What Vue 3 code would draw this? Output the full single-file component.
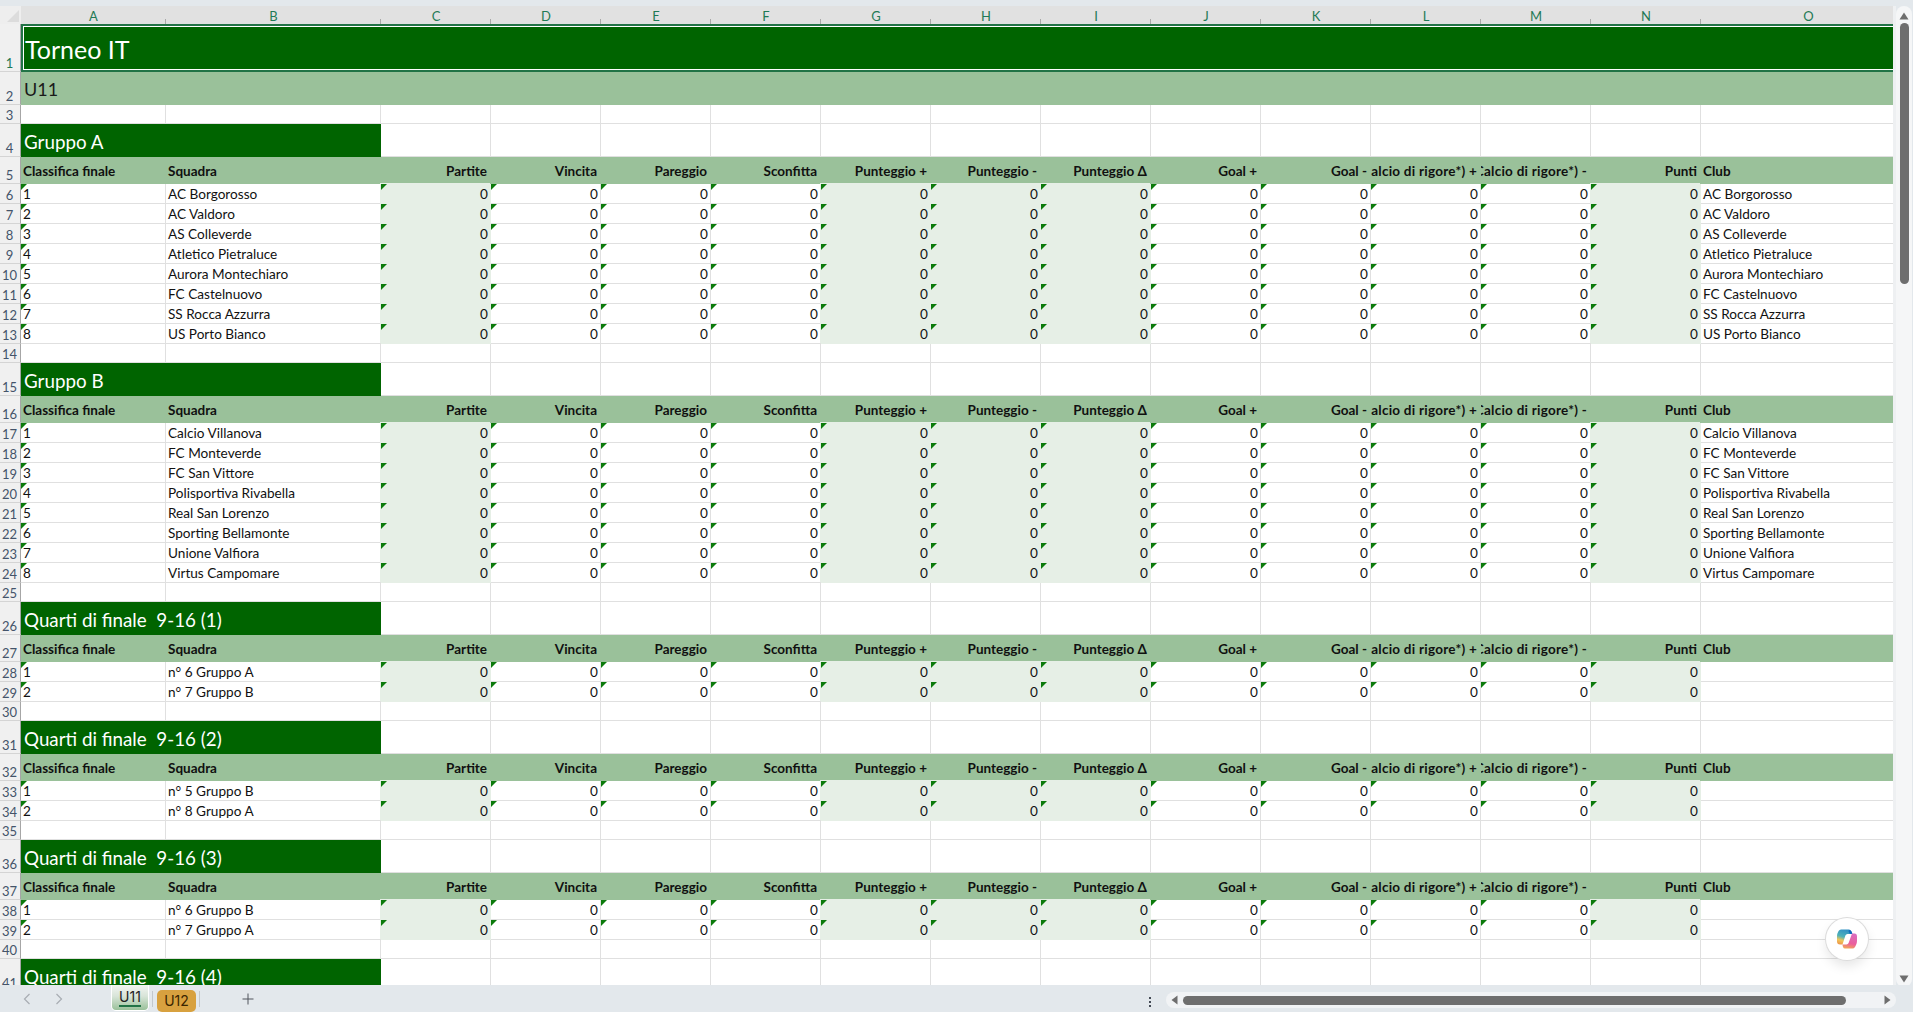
<script setup>
const letters = 'ABCDEFGHIJKLMNO'.split('')
const heads = ['Partite','Vincita','Pareggio','Sconfitta','Punteggio +','Punteggio -','Punteggio Δ','Goal +','Goal -','Goal (Calcio di rigore*) +','Goal (Calcio di rigore*) -','Punti']
const clipped = [9, 10]
const shaded = [0,4,5,6,11]
const zeros = heads.map((_, i) => i)
const sections = [
  { title: 'Gruppo A', club: true, teams: ['AC Borgorosso','AC Valdoro','AS Colleverde','Atletico Pietraluce','Aurora Montechiaro','FC Castelnuovo','SS Rocca Azzurra','US Porto Bianco'] },
  { title: 'Gruppo B', club: true, teams: ['Calcio Villanova','FC Monteverde','FC San Vittore','Polisportiva Rivabella','Real San Lorenzo','Sporting Bellamonte','Unione Valfiora','Virtus Campomare'] },
  { title: 'Quarti di finale\u00a0 9-16 (1)', club: false, teams: ['n° 6 Gruppo A','n° 7 Gruppo B'] },
  { title: 'Quarti di finale\u00a0 9-16 (2)', club: false, teams: ['n° 5 Gruppo B','n° 8 Gruppo A'] },
  { title: 'Quarti di finale\u00a0 9-16 (3)', club: false, teams: ['n° 6 Gruppo B','n° 7 Gruppo A'] },
]
const rows = []
rows.push({ kind: 'blank' })
sections.forEach(s => {
  rows.push({ kind: 'title', title: s.title })
  rows.push({ kind: 'head' })
  s.teams.forEach((t, i) => rows.push({ kind: 'data', pos: i + 1, team: t, club: s.club ? t : '' }))
  rows.push({ kind: 'blank' })
})
rows.push({ kind: 'title', title: 'Quarti di finale\u00a0 9-16 (4)' })
rows.forEach((r, i) => { r.n = i + 3 })
</script>

<template>
  <div class="app">
    <div class="topstrip"></div>
    <div class="main">
      <div class="sheet">
        <div class="row colhead">
          <div class="corner"><span class="corner-tri"></span></div>
          <div v-for="l in letters" :key="l" class="letter">{{ l }}</div>
        </div>
        <div class="row r1">
          <div class="rn sel">1</div>
          <div class="banner">Torneo IT</div>
        </div>
        <div class="row r2">
          <div class="rn">2</div>
          <div class="sub">U11</div>
        </div>
        <div v-for="r in rows" :key="r.n" class="row" :class="'k-' + r.kind">
          <div class="rn">{{ r.n }}</div>
          <template v-if="r.kind === 'blank'">
            <div v-for="l in letters" :key="l" class="cell"></div>
          </template>
          <template v-else-if="r.kind === 'title'">
            <div class="gtitle">{{ r.title }}</div>
            <div v-for="l in letters.slice(2)" :key="l" class="cell"></div>
          </template>
          <template v-else-if="r.kind === 'head'">
            <div class="hcell left">Classifica finale</div>
            <div class="hcell left">Squadra</div>
            <div v-for="(h, i) in heads" :key="h" class="hcell right"><span :class="{ wide: clipped.includes(i) }">{{ h }}</span></div>
            <div class="hcell left">Club</div>
          </template>
          <template v-else>
            <div class="cell txt tri">{{ r.pos }}</div>
            <div class="cell txt">{{ r.team }}</div>
            <div v-for="i in zeros" :key="i" class="cell num tri" :class="{ shade: shaded.includes(i) }">0</div>
            <div class="cell txt">{{ r.club }}</div>
          </template>
        </div>
      </div>
      <div class="gutter"></div>
      <div class="vscroll">
        <svg class="arrow" width="10" height="8" viewBox="0 0 10 8"><path d="M5 0.5 L9.5 7.5 H0.5 Z" fill="#6e6e6e"/></svg>
        <div class="vthumb"></div>
        <div class="vspace"></div>
        <svg class="arrow" width="10" height="8" viewBox="0 0 10 8"><path d="M5 7.5 L9.5 0.5 H0.5 Z" fill="#6e6e6e"/></svg>
      </div>
      <div class="copilot">
        <svg width="22" height="22" viewBox="0 0 22 22">
          <defs>
            <linearGradient id="cpa" x1="0.6" y1="0" x2="0.3" y2="1">
              <stop offset="0" stop-color="#2f8fc4"/>
              <stop offset="0.5" stop-color="#4fb3b8"/>
              <stop offset="0.75" stop-color="#f0c65a"/>
              <stop offset="1" stop-color="#ee9a4a"/>
            </linearGradient>
            <linearGradient id="cpb" x1="0.6" y1="0" x2="0.4" y2="1">
              <stop offset="0" stop-color="#d96fc0"/>
              <stop offset="0.65" stop-color="#ea5f9c"/>
              <stop offset="1" stop-color="#f2a35a"/>
            </linearGradient>
          </defs>
          <path d="M5 1.5 H13 Q14.5 1.5 15 3 L16 6 H11.5 Q10 6 9.4 7.5 L6.5 16.5 H4 Q1 16.5 1 13.5 V8 Q1 6.5 1.6 5 L2.6 3 Q3.4 1.5 5 1.5 Z" fill="url(#cpa)"/>
          <path d="M13 2 Q15 2 15.6 3.6 L16.5 6 H14 L12.6 3.4 Z" fill="#0f6cbd"/>
          <path d="M16 5.5 H18.5 Q21 5.5 21 8.5 V13 Q21 15 20 17 L19 19 Q18 20.5 16.5 20.5 H9 Q7.5 20.5 7 19 L6.4 16.4 H10.5 Q12 16.4 12.6 15 Z" fill="url(#cpb)"/>
        </svg>
      </div>
    </div>
    <div class="tabbar">
      <div class="navs">
        <svg width="8" height="12" viewBox="0 0 8 12"><path d="M6.5 1 L1.5 6 L6.5 11" fill="none" stroke="#a8adb3" stroke-width="1.2"/></svg>
        <svg width="8" height="12" viewBox="0 0 8 12"><path d="M1.5 1 L6.5 6 L1.5 11" fill="none" stroke="#a8adb3" stroke-width="1.2"/></svg>
      </div>
      <div class="tab active">U11</div>
      <span class="tabsep"></span>
      <div class="tab u12">U12</div>
      <span class="tabsep"></span>
      <svg class="plus" width="12" height="12" viewBox="0 0 12 12"><path d="M6 0.5 V11.5 M0.5 6 H11.5" stroke="#50555c" stroke-width="1"/></svg>
      <div class="dots"><i></i><i></i><i></i></div>
      <div class="hscroll">
        <svg width="7" height="10" viewBox="0 0 7 10"><path d="M0.5 5 L6.5 0.5 V9.5 Z" fill="#6e6e6e"/></svg>
        <div class="hthumb"></div>
        <svg width="7" height="10" viewBox="0 0 7 10"><path d="M6.5 5 L0.5 0.5 V9.5 Z" fill="#6e6e6e"/></svg>
      </div>
    </div>
  </div>
</template>

<style scoped>
.app {
  width: 1913px;
  height: 1012px;
  display: flex;
  flex-direction: column;
  overflow: hidden;
  background: #e3e8ec;
  font-family: Lato, "Liberation Sans", sans-serif;
  color: #111;
}
.topstrip { height: 6px; flex: none; }
.main {
  position: relative;
  height: 979px;
  flex: none;
  display: flex;
}
.sheet {
  width: 1893px;
  flex: none;
  overflow: hidden;
  background: #fff;
}
.row {
  display: grid;
  grid-template-columns: 21px 145px 215px repeat(12, 110px) 215px;
  height: 20px;
  position: relative;
}
.colhead { height: 18px; background: #e1e1e1; }
.r1 { height: 48px; }
.r2 { height: 33px; }
.k-blank { height: 19px; }
.k-title { height: 33px; }
.k-head { height: 27px; }
.corner { position: relative; background: #eeeeee; }
.corner-tri {
  position: absolute;
  right: 2px;
  bottom: 2px;
  border-left: 12px solid transparent;
  border-bottom: 12px solid #dcdcdc;
}
.letter {
  display: flex;
  align-items: center;
  justify-content: center;
  font-size: 13px;
  padding-top: 1px;
  color: #1f7a55;
  position: relative;
}
.letter::after {
  content: "";
  position: absolute;
  right: 0;
  bottom: 0;
  width: 1px;
  height: 5px;
  background: #a9a9a9;
}
.rn {
  background: #f0f0f0;
  border-right: 1px solid #a6a6a6;
  border-bottom: 1px solid #d4d4d4;
  font-size: 13px;
  color: #44546a;
  display: flex;
  align-items: flex-end;
  justify-content: center;
  line-height: 16px;
  padding-right: 1px;
  overflow: hidden;
}
.rn.sel { color: #1f7a55; }
.banner {
  grid-column: 2 / -1;
  background: #006400;
  color: #fff;
  font-size: 25px;
  line-height: 38px;
  padding-left: 2px;
  border: 2px solid #217346;
  border-right: none;
  box-shadow: inset 0 0 0 1px #fff;
  display: flex;
  align-items: center;
  padding-top: 2px;
}
.sub {
  grid-column: 2 / -1;
  background: #9ac19a;
  font-size: 18px;
  padding-left: 3px;
  display: flex;
  align-items: center;
  color: #1a1a1a;
}
.gtitle {
  grid-column: 2 / 4;
  background: #006400;
  color: #fff;
  font-size: 18.8px;
  padding-left: 3px;
  display: flex;
  align-items: flex-end;
  line-height: 30px;
}
.cell {
  border-right: 1px solid #e0e0e0;
  border-bottom: 1px solid #e0e0e0;
  font-size: 13.6px;
  line-height: 17px;
  color: #111;
  position: relative;
  min-width: 0;
  white-space: nowrap;
  display: flex;
  align-items: flex-end;
}
.txt { padding-left: 2px; }
.num { justify-content: flex-end; padding-right: 2px; }
.shade {
  background: #e6efe6;
  border-color: #e6efe6;
  box-shadow: -1px -1px 0 #e6efe6;
}
.tri::before {
  content: "";
  position: absolute;
  left: 0;
  top: 0;
  border-top: 6px solid #0b7a0b;
  border-right: 6px solid transparent;
}
.hcell {
  background: #9ac19a;
  font-size: 13.5px;
  font-weight: 700;
  color: #101010;
  display: flex;
  align-items: flex-end;
  line-height: 18px;
  padding-bottom: 4px;
  white-space: nowrap;
  overflow: hidden;
  min-width: 0;
}
.hcell.left { padding-left: 2px; }
.hcell.right { justify-content: flex-end; padding-right: 4px; }
.hcell.right span { flex: none; }
.hcell.right .wide { letter-spacing: 0.25px; }
.gutter { width: 3px; flex: none; background: #eef0f2; }
.vscroll {
  width: 16px;
  flex: none;
  height: 981px;
  background: #f5f6f7;
  border-radius: 8px;
  display: flex;
  flex-direction: column;
  align-items: center;
  padding: 6px 0 4px;
  box-sizing: border-box;
}
.arrow { flex: none; }
.vthumb {
  width: 9px;
  height: 261px;
  background: #6e6e6e;
  border-radius: 5px;
  margin-top: 3px;
  flex: none;
}
.vspace { flex: 1; }
.copilot {
  position: absolute;
  left: 1826px;
  top: 912px;
  width: 42px;
  height: 42px;
  border-radius: 50%;
  background: #fff;
  box-shadow: 0 0 0 1px #dcdcdc, 0 6px 12px rgba(0, 0, 0, 0.10);
  display: flex;
  align-items: center;
  justify-content: center;
}
.tabbar {
  height: 27px;
  flex: none;
  display: flex;
  align-items: center;
  position: relative;
  background: #e3e8ec;
}
.navs {
  display: flex;
  gap: 24px;
  width: 111px;
  padding-left: 23px;
  box-sizing: border-box;
  flex: none;
}
.tab {
  font-size: 14px;
  font-family: Inter, "Noto Sans", sans-serif;
  color: #222;
  display: flex;
  align-items: center;
  justify-content: center;
  flex: none;
}
.tab.active {
  width: 38px;
  height: 26px;
  align-self: flex-start;
  box-sizing: border-box;
  border: 1px solid #fff;
  border-top: none;
  border-radius: 0 0 5px 5px;
  background: linear-gradient(#f2f5f2 0%, #d8e4d8 45%, #9ac19a 100%);
  position: relative;
  padding-bottom: 3px;
}
.tab.active::after {
  content: "";
  position: absolute;
  left: 7px;
  right: 7px;
  bottom: 3px;
  height: 2px;
  background: #217346;
}
.tabsep {
  width: 1px;
  height: 16px;
  background: #c3c8cd;
  margin: 0 4px 0 3px;
  flex: none;
}
.tab.u12 {
  width: 39px;
  height: 22px;
  margin-top: 4px;
  border-radius: 5px;
  background: #d8a13f;
  color: #3a2500;
}
.plus { margin-left: 38px; flex: none; }
.dots {
  position: absolute;
  left: 1149px;
  top: 12px;
  display: flex;
  flex-direction: column;
  gap: 2px;
}
.dots i {
  display: block;
  width: 2px;
  height: 2px;
  background: #444a55;
}
.hscroll {
  position: absolute;
  left: 1166px;
  top: 7px;
  width: 730px;
  height: 16px;
  border-radius: 8px;
  background: #f1f3f5;
  display: flex;
  align-items: center;
  padding: 0 5px;
  box-sizing: border-box;
}
.hthumb {
  width: 663px;
  height: 9px;
  margin-left: 5px;
  margin-right: auto;
  background: #6e6e6e;
  border-radius: 5px;
}
</style>
